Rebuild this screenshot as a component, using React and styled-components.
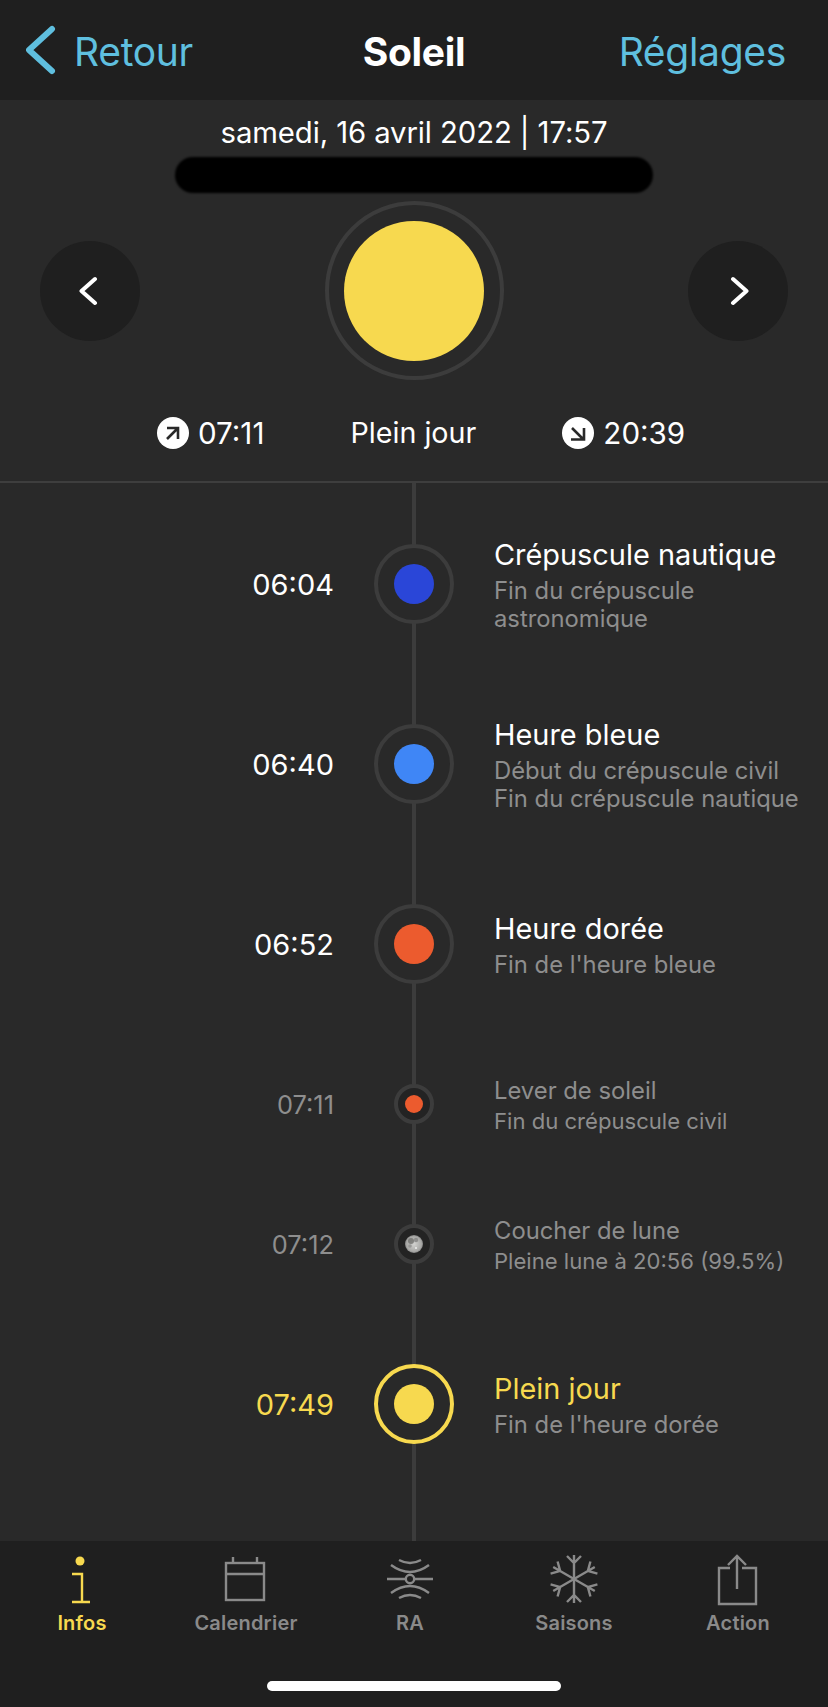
import React from "react";
import styled, { createGlobalStyle } from "styled-components";

const Global = createGlobalStyle`
  html, body { margin: 0; padding: 0; background: #292929; }
  * { box-sizing: border-box; }
  body { font-family: "Inter", "Noto Sans", sans-serif; }
`;

const Page = styled.div`
  width: 828px;
  height: 1707px;
  display: flex;
  flex-direction: column;
  background: #292929;
  color: #fff;
  overflow: hidden;
`;

const NavBar = styled.header`
  height: 100px;
  flex: none;
  display: grid;
  grid-template-columns: 1fr auto 1fr;
  align-items: center;
  padding: 2px 42px 0;
  background: #1f1f1f;
  font-size: 39px;
  letter-spacing: -0.3px;
`;

const BackLink = styled.div`
  display: flex;
  align-items: center;
  gap: 18px;
  margin-left: -16px;
  color: #5fbfdf;
  svg { display: block; margin-top: -2px; }
`;

const NavTitle = styled.div`
  font-weight: 700;
  color: #fff;
`;

const SettingsLink = styled.div`
  text-align: right;
  color: #5fbfdf;
`;

const Hero = styled.section`
  flex: none;
  height: 383px;
  border-bottom: 2px solid #3e3e3e;
  display: flex;
  flex-direction: column;
  align-items: center;
`;

const DateLine = styled.div`
  margin-top: 15px;
  font-size: 29.3px;
  line-height: 36px;
  height: 36px;
  letter-spacing: -0.1px;
`;

const Redaction = styled.div`
  margin-top: 6px;
  width: 478px;
  height: 36px;
  border-radius: 18px;
  background: #000;
  filter: blur(1px);
`;

const SunRow = styled.div`
  margin-top: 8px;
  width: 100%;
  padding: 0 40px;
  display: flex;
  justify-content: space-between;
  align-items: center;
`;

const RoundButton = styled.div`
  width: 100px;
  height: 100px;
  border-radius: 50%;
  background: #1f1f1f;
  display: flex;
  align-items: center;
  justify-content: center;
  svg { display: block; }
`;

const SunRing = styled.div`
  width: 179px;
  height: 179px;
  border-radius: 50%;
  border: 4px solid #3c3c3c;
  display: flex;
  align-items: center;
  justify-content: center;
`;

const SunDisc = styled.div`
  width: 140px;
  height: 140px;
  border-radius: 50%;
  background: #f7d94f;
`;

const Stats = styled.div`
  margin-top: 35px;
  width: 100%;
  padding-left: 157px;
  display: flex;
  align-items: center;
  gap: 86px;
  font-size: 28.7px;
  line-height: 36px;
`;

const Stat = styled.div`
  display: flex;
  align-items: center;
  gap: 9px;
  font-size: 29.6px;
  svg { display: block; }
`;

const Timeline = styled.main`
  flex: 1;
  min-height: 0;
  padding-top: 11px;
  position: relative;
  overflow: hidden;
  &::before {
    content: "";
    position: absolute;
    left: 412px;
    top: 0;
    bottom: 0;
    width: 4px;
    background: #3c3c3c;
  }
`;

const Row = styled.div`
  height: ${(p) => (p.$small ? 140 : 180)}px;
  display: grid;
  grid-template-columns: 334px 160px 1fr;
  align-items: center;
  position: relative;
`;

const Time = styled.div`
  text-align: right;
  font-size: ${(p) => (p.$small ? 25.4 : 29)}px;
  color: ${(p) => (p.$gold ? "#f7d94f" : p.$small ? "#8e8e8e" : "#fff")};
`;

const NodeCell = styled.div`
  display: flex;
  justify-content: center;
`;

const Node = styled.div`
  width: ${(p) => (p.$small ? 40 : 80)}px;
  height: ${(p) => (p.$small ? 40 : 80)}px;
  border-radius: 50%;
  border: 4px solid ${(p) => (p.$gold ? "#f7d94f" : "#3c3c3c")};
  background: ${(p) => (p.$small ? "#232323" : "#292929")};
  display: flex;
  align-items: center;
  justify-content: center;
  svg { display: block; }
`;

const Dot = styled.div`
  width: ${(p) => (p.$small ? 18 : 40)}px;
  height: ${(p) => (p.$small ? 18 : 40)}px;
  border-radius: 50%;
  background: ${(p) => p.$color};
`;

const Info = styled.div`
  display: flex;
  flex-direction: column;
  padding-top: 2px;
`;

const Title = styled.div`
  font-size: ${(p) => (p.$small ? 23.8 : 28.9)}px;
  line-height: ${(p) => (p.$small ? 32 : 36)}px;
  margin-bottom: ${(p) => (p.$small ? 0 : 4)}px;
  color: ${(p) => (p.$gold ? "#f7d94f" : p.$small ? "#8e8e8e" : "#fff")};
`;

const Sub = styled.div`
  font-size: ${(p) => (p.$small ? 22.1 : 23.8)}px;
  line-height: 28px;
  color: #8e8e8e;
`;

const TabBar = styled.nav`
  flex: none;
  height: 166px;
  background: #1f1f1f;
  position: relative;
  display: grid;
  grid-template-columns: repeat(5, 164px);
  align-content: start;
  padding-top: 8px;
`;

const Tab = styled.div`
  display: flex;
  flex-direction: column;
  align-items: center;
  color: ${(p) => (p.$active ? "#f7d94f" : "#8a8a8a")};
  svg { display: block; }
`;

const TabLabel = styled.div`
  font-size: 20px;
  font-weight: 600;
  line-height: 24px;
  letter-spacing: 0.2px;
  margin-top: 2px;
`;

const HomeBar = styled.div`
  position: absolute;
  left: 267px;
  top: 140px;
  width: 294px;
  height: 10px;
  border-radius: 5px;
  background: #fff;
`;

const Chevron = ({ dir }) => (
  <svg width="22" height="34" viewBox="0 0 22 34" fill="none" stroke="#fff" strokeWidth="4" strokeLinecap="round" strokeLinejoin="round">
    <path d={dir === "left" ? "M16 5 L2.5 17 L16 29" : "M6 5 L19.5 17 L6 29"} />
  </svg>
);

const RiseIcon = () => (
  <svg width="32" height="32" viewBox="0 0 32 32">
    <circle cx="16" cy="16" r="16" fill="#fff" />
    <path d="M10 11 H21 V22 M21 11 L10 22" fill="none" stroke="#292929" strokeWidth="2.6" />
  </svg>
);

const SetIcon = () => (
  <svg width="32" height="32" viewBox="0 0 32 32">
    <circle cx="16" cy="16" r="16" fill="#fff" />
    <path d="M10 11 L21 22 M9 22.5 H22 V11" fill="none" stroke="#292929" strokeWidth="2.6" />
  </svg>
);

const Moon = () => (
  <svg width="18" height="18" viewBox="0 0 18 18">
    <defs>
      <radialGradient id="moon" cx="50%" cy="50%" r="55%">
        <stop offset="0%" stopColor="#d2d2d0" />
        <stop offset="75%" stopColor="#a8a8a6" />
        <stop offset="100%" stopColor="#6e6e6e" />
      </radialGradient>
    </defs>
    <circle cx="9" cy="9" r="9" fill="url(#moon)" />
    <circle cx="6" cy="6" r="3" fill="#6f6f6d" opacity="0.8" />
    <circle cx="11" cy="5" r="2.2" fill="#7c7c7a" opacity="0.7" />
    <circle cx="5" cy="11" r="1.8" fill="#80807e" opacity="0.6" />
    <circle cx="11" cy="13" r="1" fill="#eeeeec" />
  </svg>
);

const TabIcon = ({ children }) => (
  <svg width="60" height="60" viewBox="0 0 60 60" fill="none" stroke="currentColor" strokeWidth="2.4">
    {children}
  </svg>
);

const InfoIcon = () => (
  <TabIcon>
    <circle cx="28" cy="12" r="4.5" fill="currentColor" stroke="none" />
    <path d="M20 25 H30 V53 M20 53 H38" />
  </TabIcon>
);

const CalendarIcon = () => (
  <TabIcon>
    <rect x="10" y="14" width="38" height="37" />
    <path d="M10 25 H48 M17 8 V14 M41 8 V14" />
  </TabIcon>
);

const RaIcon = () => (
  <TabIcon>
    <path d="M7 30 H26 M34 30 H53" />
    <circle cx="30" cy="30" r="4.2" />
    <path d="M19 11 Q30 17 41 11 M11 16 Q30 30 49 16 M11 44 Q30 30 49 44 M19 49 Q30 43 41 49" />
  </TabIcon>
);

const SnowIcon = () => (
  <TabIcon>
    {[0, 60, 120, 180, 240, 300].map((a) => (
      <path key={a} d="M30 30 V6 M23 7 L30 14 L37 7" transform={`rotate(${a} 30 30)`} />
    ))}
  </TabIcon>
);

const ActionIcon = () => (
  <TabIcon>
    <path d="M22 19 H11 V55 H48 V19 H34" />
    <path d="M29 40 V7 M20 16 L29 7 L38 16" />
  </TabIcon>
);

const events = [
  { time: "06:04", title: "Crépuscule nautique", sub: ["Fin du crépuscule", "astronomique"], color: "#2a46d8" },
  { time: "06:40", title: "Heure bleue", sub: ["Début du crépuscule civil", "Fin du crépuscule nautique"], color: "#3f86f6" },
  { time: "06:52", title: "Heure dorée", sub: ["Fin de l'heure bleue"], color: "#ec5b2e" },
  { time: "07:11", title: "Lever de soleil", sub: ["Fin du crépuscule civil"], color: "#ec5b2e", small: true },
  { time: "07:12", title: "Coucher de lune", sub: ["Pleine lune à 20:56 (99.5%)"], moon: true, small: true },
  { time: "07:49", title: "Plein jour", sub: ["Fin de l'heure dorée"], color: "#f7d94f", gold: true },
];

const tabs = [
  { label: "Infos", Icon: InfoIcon, active: true },
  { label: "Calendrier", Icon: CalendarIcon },
  { label: "RA", Icon: RaIcon },
  { label: "Saisons", Icon: SnowIcon },
  { label: "Action", Icon: ActionIcon },
];

export default function App() {
  return (
    <Page>
      <Global />
      <NavBar>
        <BackLink>
          <svg width="30" height="50" viewBox="0 0 30 50" fill="none" stroke="#5fbfdf" strokeWidth="6" strokeLinecap="round" strokeLinejoin="round">
            <path d="M26 4 L3 25 L26 46" />
          </svg>
          Retour
        </BackLink>
        <NavTitle>Soleil</NavTitle>
        <SettingsLink>Réglages</SettingsLink>
      </NavBar>
      <Hero>
        <DateLine>samedi, 16 avril 2022 | 17:57</DateLine>
        <Redaction />
        <SunRow>
          <RoundButton><Chevron dir="left" /></RoundButton>
          <SunRing><SunDisc /></SunRing>
          <RoundButton><Chevron dir="right" /></RoundButton>
        </SunRow>
        <Stats>
          <Stat><RiseIcon />07:11</Stat>
          <div>Plein jour</div>
          <Stat><SetIcon />20:39</Stat>
        </Stats>
      </Hero>
      <Timeline>
        {events.map((e) => (
          <Row key={e.time} $small={e.small}>
            <Time $small={e.small} $gold={e.gold}>{e.time}</Time>
            <NodeCell>
              <Node $small={e.small} $gold={e.gold}>
                {e.moon ? <Moon /> : <Dot $small={e.small} $color={e.color} />}
              </Node>
            </NodeCell>
            <Info>
              <Title $small={e.small} $gold={e.gold}>{e.title}</Title>
              {e.sub.map((s) => <Sub key={s} $small={e.small}>{s}</Sub>)}
            </Info>
          </Row>
        ))}
      </Timeline>
      <TabBar>
        {tabs.map(({ label, Icon, active }) => (
          <Tab key={label} $active={active}>
            <Icon />
            <TabLabel>{label}</TabLabel>
          </Tab>
        ))}
        <HomeBar />
      </TabBar>
    </Page>
  );
}
